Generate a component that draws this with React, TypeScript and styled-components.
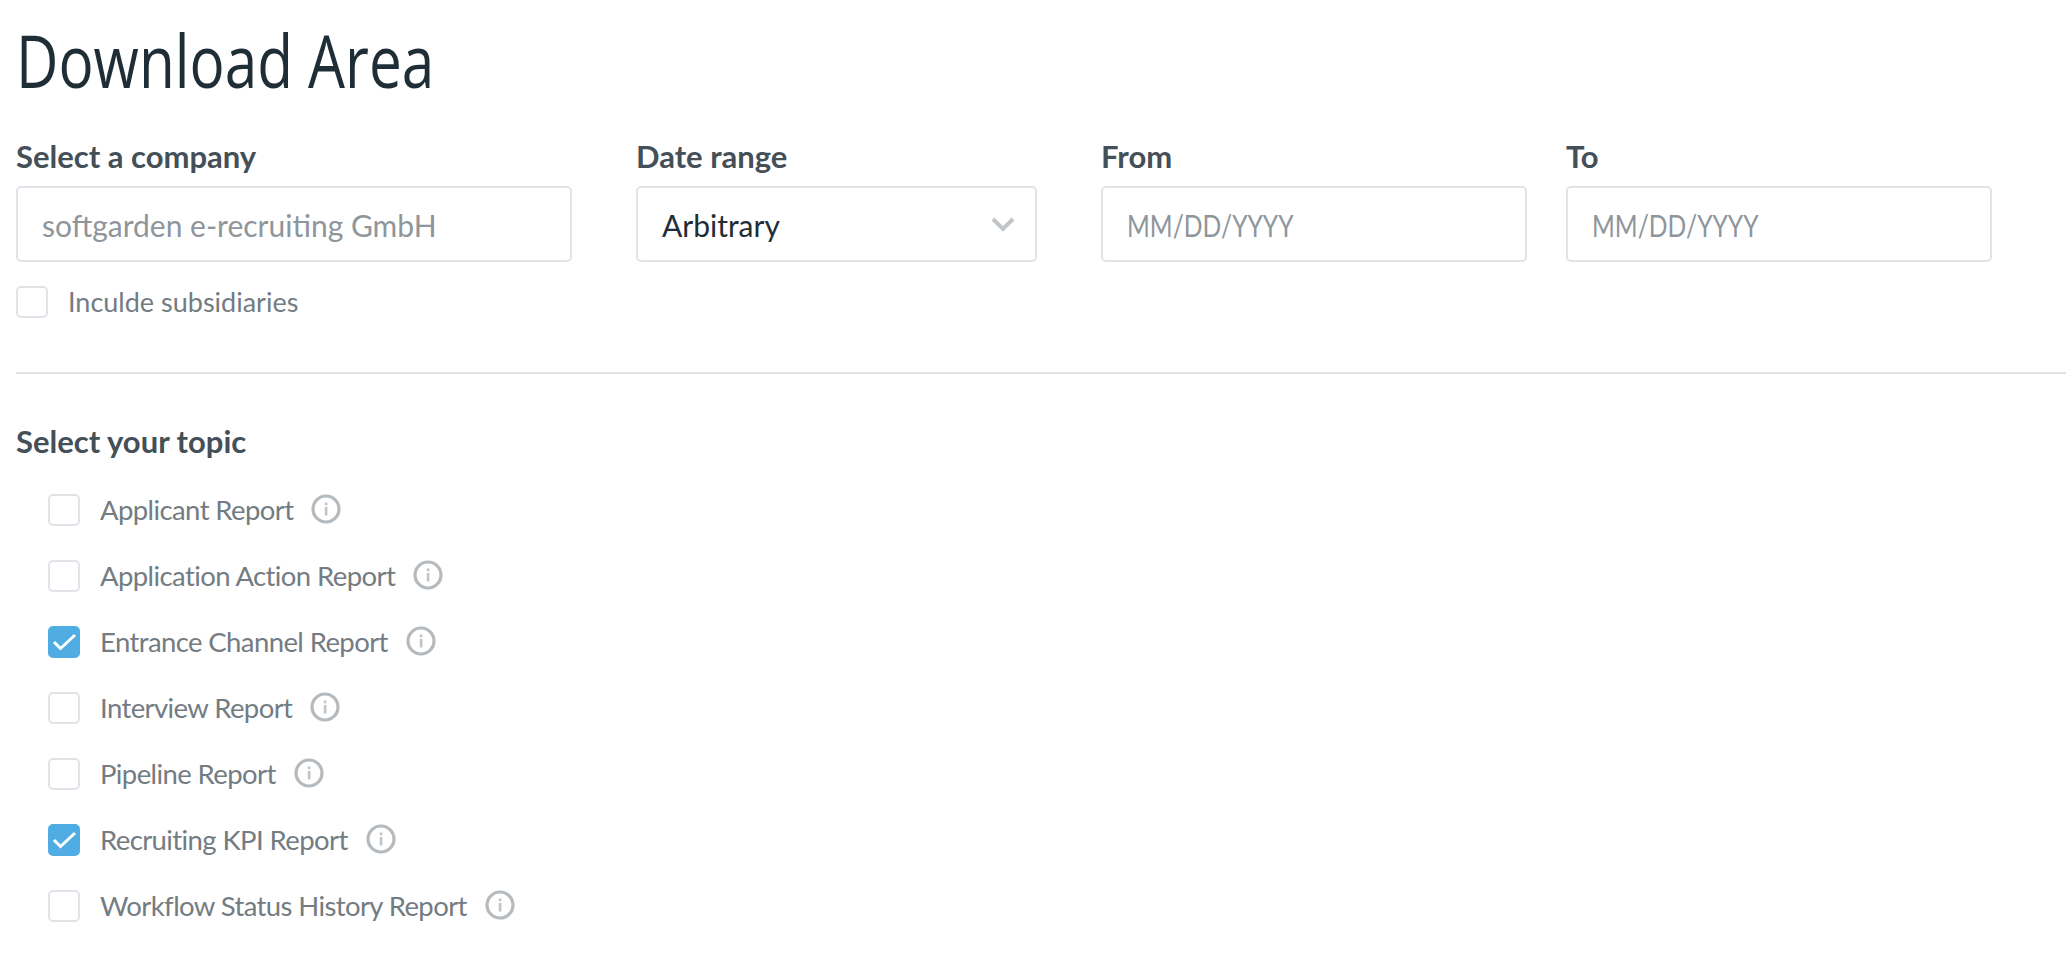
import { createGlobalStyle } from 'styled-components';
import styled from 'styled-components';

const GlobalStyle = createGlobalStyle`
  html, body {
    margin: 0;
    padding: 0;
    background: #fff;
    overflow: hidden;
  }
  body {
    font-family: 'Lato', 'Liberation Sans', sans-serif;
  }
`;

const Page = styled.div`
  width: 2066px;
  height: 956px;
  padding: 0 0 0 16px;
  box-sizing: border-box;
  overflow: hidden;
`;

const Title = styled.h1`
  margin: 0;
  padding-top: 20px;
  height: 121px;
  box-sizing: border-box;
  font-family: 'Open Sans', sans-serif;
  font-size: 74px;
  font-weight: 400;
  line-height: 80px;
  color: #1e2d36;
  transform: scaleX(0.79);
  transform-origin: left center;
  white-space: nowrap;
`;

const FilterRow = styled.div`
  display: flex;
  align-items: flex-start;
`;

const Field = styled.div<{ $width: number; $gap: number }>`
  width: ${(p) => p.$width}px;
  margin-right: ${(p) => p.$gap}px;
  flex: none;
`;

const FieldLabel = styled.label`
  display: block;
  height: 65px;
  padding-top: 17px;
  box-sizing: border-box;
  font-size: 31px;
  font-weight: 700;
  line-height: 36px;
  color: #444f58;
`;

const Input = styled.div<{ $muted?: boolean }>`
  position: relative;
  height: 76px;
  padding: 2px 24px 0;
  box-sizing: border-box;
  display: flex;
  align-items: center;
  background: #fff;
  border: 2px solid #e1e3e8;
  border-radius: 5px;
  font-size: 30px;
  color: ${(p) => (p.$muted ? '#8e969c' : '#1e2d36')};
`;

const DateHint = styled.span`
  display: inline-block;
  transform: scaleX(0.82);
  transform-origin: left center;
`;

const Chevron = styled.svg`
  position: absolute;
  right: 20px;
  top: 28px;
  width: 24px;
  height: 16px;
`;

const Box = styled.span<{ $checked?: boolean; $nudge?: boolean }>`
  flex: none;
  width: 32px;
  height: 32px;
  box-sizing: border-box;
  display: flex;
  align-items: center;
  justify-content: center;
  border-radius: 5px;
  border: 2px solid ${(p) => (p.$checked ? '#4fade3' : '#e1e3e8')};
  background: ${(p) => (p.$checked ? '#4fade3' : '#fff')};
  margin-top: ${(p) => (p.$nudge ? '2px' : '0')};
`;

const Subsidiaries = styled.div`
  display: flex;
  align-items: center;
  gap: 20px;
  margin-top: 24px;
  height: 32px;
  font-size: 27px;
  line-height: 28px;
  color: #737c82;
`;

const Divider = styled.hr`
  margin: 54px 0 0;
  border: 0;
  border-top: 2px solid #e1e3e8;
`;

const TopicTitle = styled.h2`
  margin: 49px 0 0;
  font-size: 31px;
  font-weight: 700;
  line-height: 36px;
  color: #444f58;
`;

const TopicList = styled.ul`
  list-style: none;
  margin: 17px 0 0;
  padding: 0 0 0 32px;
`;

const TopicRow = styled.li`
  display: flex;
  align-items: center;
  height: 66px;
  font-size: 27.5px;
  letter-spacing: -0.6px;
  color: #737c82;
`;

const TopicName = styled.span`
  margin-left: 20px;
  margin-right: 18px;
`;

const InfoIcon = styled.svg`
  width: 30px;
  height: 30px;
  flex: none;
`;

const topics = [
  { name: 'Applicant Report', checked: false },
  { name: 'Application Action Report', checked: false },
  { name: 'Entrance Channel Report', checked: true },
  { name: 'Interview Report', checked: false },
  { name: 'Pipeline Report', checked: false },
  { name: 'Recruiting KPI Report', checked: true },
  { name: 'Workflow Status History Report', checked: false },
];

function CheckBox({ checked, nudge }: { checked?: boolean; nudge?: boolean }) {
  return (
    <Box $checked={checked} $nudge={nudge}>
      {checked && (
        <svg width="28" height="24" viewBox="0 0 28 24" fill="none">
          <path d="M4 12l6.5 6.5L25 5" stroke="#fff" strokeWidth="3" />
        </svg>
      )}
    </Box>
  );
}

function Info() {
  return (
    <InfoIcon viewBox="0 0 30 30" fill="none">
      <circle cx="15" cy="15" r="13" stroke="#b5babe" strokeWidth="3.2" />
      <rect x="13.8" y="8.5" width="2.6" height="2.8" fill="#c0c4c7" />
      <rect x="13.8" y="13" width="2.6" height="8.5" fill="#c0c4c7" />
    </InfoIcon>
  );
}

export default function App() {
  return (
    <Page>
      <GlobalStyle />
      <Title>Download Area</Title>
      <FilterRow>
        <Field $width={556} $gap={64}>
          <FieldLabel>Select a company</FieldLabel>
          <Input $muted>softgarden e-recruiting GmbH</Input>
          <Subsidiaries>
            <CheckBox />
            Inculde subsidiaries
          </Subsidiaries>
        </Field>
        <Field $width={401} $gap={64}>
          <FieldLabel>Date range</FieldLabel>
          <Input>
            Arbitrary
            <Chevron viewBox="0 0 24 16" fill="none">
              <path d="M2 3l10 10L22 3" stroke="#c0c5c8" strokeWidth="4" />
            </Chevron>
          </Input>
        </Field>
        <Field $width={426} $gap={39}>
          <FieldLabel>From</FieldLabel>
          <Input $muted>
            <DateHint>MM/DD/YYYY</DateHint>
          </Input>
        </Field>
        <Field $width={426} $gap={0}>
          <FieldLabel>To</FieldLabel>
          <Input $muted>
            <DateHint>MM/DD/YYYY</DateHint>
          </Input>
        </Field>
      </FilterRow>
      <Divider />
      <TopicTitle>Select your topic</TopicTitle>
      <TopicList>
        {topics.map((t) => (
          <TopicRow key={t.name}>
            <CheckBox checked={t.checked} nudge />
            <TopicName>{t.name}</TopicName>
            <Info />
          </TopicRow>
        ))}
      </TopicList>
    </Page>
  );
}
